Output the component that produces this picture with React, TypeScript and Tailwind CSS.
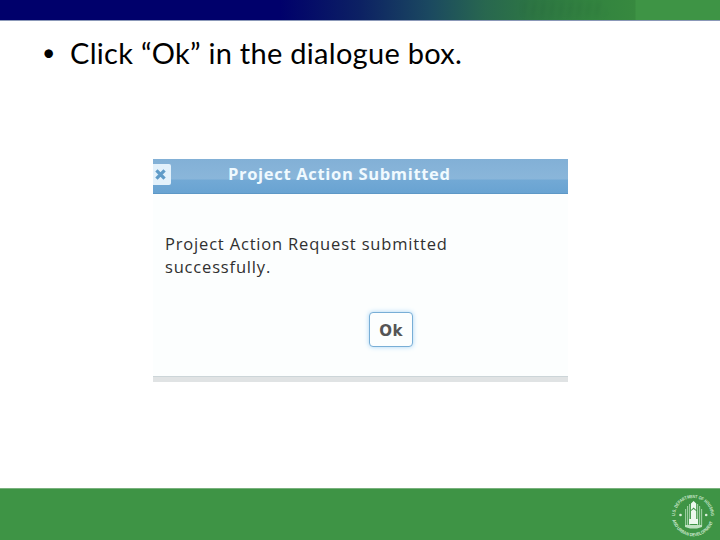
const CloseIcon = () => (
  <svg width="11" height="11" viewBox="0 0 10 10" fill="none">
    <path
      d="M1.3 1.3L8.7 8.7M8.7 1.3L1.3 8.7"
      stroke="#5f9bc8"
      strokeWidth="3"
    />
  </svg>
);

const HudSeal = () => (
  <svg width="48" height="48" viewBox="0 0 48 48" fill="none">
    <defs>
      <path id="ringTop" d="M6 25A18 18 0 0 1 42 25" />
      <path id="ringBottom" d="M3.4 29A21.2 21.2 0 0 0 44.6 29" />
    </defs>
    <g
      fill="#cfe9d1"
      fontSize="4.6"
      fontWeight="700"
      fontFamily="'Liberation Sans', sans-serif"
    >
      <text textLength="56" lengthAdjust="spacingAndGlyphs">
        <textPath href="#ringTop">U.S. DEPARTMENT OF HOUSING</textPath>
      </text>
      <text textLength="54" lengthAdjust="spacingAndGlyphs">
        <textPath href="#ringBottom">AND URBAN DEVELOPMENT</textPath>
      </text>
    </g>
    <circle cx="11.5" cy="24" r="1.3" fill="#dcefdc" />
    <circle cx="37.2" cy="24" r="1.3" fill="#dcefdc" />
    <path
      d="M16.6 18V35M18.6 15V35M20.6 13V35M28.6 13V35M30.6 15V35M32.6 18V35"
      stroke="#9fd0a3"
      strokeWidth="1.1"
    />
    <path
      d="M22 12.5L24.6 10L27.2 12.5V19L24.6 16.5L22 19ZM22 20L24.6 18L27.2 20V28H29V33H20V28H22Z"
      fill="#edf8ee"
    />
    <path d="M16 34H33V36L28 37.5H21L16 36Z" fill="#bfe1c1" />
  </svg>
);

const Dialog = () => (
  <div className="ml-[153px] mt-[82px] flex h-[223px] w-[415px] flex-col bg-[#fcfefe] font-['Open_Sans',sans-serif]">
    <div className="flex h-[35px] shrink-0 items-start border-b border-[#5d98c6] bg-[linear-gradient(to_bottom,#82b0d6_0px,#8ab6da_20px,#72a9d5_21px,#69a3d2_34px)]">
      <div className="mt-[5px] flex h-[21px] w-[18px] shrink-0 items-center justify-center rounded-r-[2px] bg-[#e3f1fb] pr-[4px]">
        <CloseIcon />
      </div>
      <h2 className="ml-[57px] mt-[3px] whitespace-nowrap text-[16.5px] font-bold leading-[24px] tracking-[0.68px] text-[#f0faff]">
        Project Action Submitted
      </h2>
    </div>
    <p className="ml-3 mt-[38px] whitespace-nowrap text-[16.5px] leading-[23px] tracking-[0.82px] text-[#303030]">
      Project Action Request submitted
      <br />
      successfully.
    </p>
    <button className="ml-[216px] mt-[34px] h-[35px] w-[44px] shrink-0 rounded-[4px] border border-[#78aed6] bg-[#fcfefe] pt-[3px] font-['DejaVu_Sans',sans-serif] text-[15px] font-bold leading-[30px] tracking-[0.5px] text-[#555555] shadow-[0_0_5px_#a8d5f5]">
      Ok
    </button>
    <div className="mt-auto h-[6px] border-t border-[#ccd5d8] bg-[#e0e3e4]" />
  </div>
);

const App = () => (
  <div className="flex h-screen w-full flex-col overflow-hidden bg-white">
    <header className="h-[21px] shrink-0 border-b border-[#8b98b8] bg-[linear-gradient(to_right,#00006b_0px,#00006b_280px,#0c2163_360px,#1b4960_430px,#28674f_485px,#2d7643_535px,#32833f_590px,#37893f_635px,#3e9445_636px)] bg-origin-border">
      <div className="ml-[523px] mt-[2px] h-[14px] w-[82px] overflow-hidden opacity-10 blur-[2px]">
        <div className="h-full bg-[repeating-linear-gradient(100deg,#174f2d_0px,#174f2d_5px,#4a9450_6px,#4a9450_9px)]" />
      </div>
    </header>
    <main className="flex-1">
      <div className="flex h-[56px] items-start pt-[12px] font-[Lato,sans-serif] text-[29px] leading-[40px] text-black">
        <span className="ml-[42px] w-[28px] shrink-0 text-[23px] leading-[38px]">
          •
        </span>
        <h1 className="whitespace-nowrap tracking-[0.29px]">
          Click “Ok” in the dialogue box.
        </h1>
      </div>
      <Dialog />
    </main>
    <footer className="flex h-[52px] shrink-0 justify-end border-t border-[#79b17d] bg-[#3e9445] pr-[3px] pt-[2px]">
      <HudSeal />
    </footer>
  </div>
);

export default App;
